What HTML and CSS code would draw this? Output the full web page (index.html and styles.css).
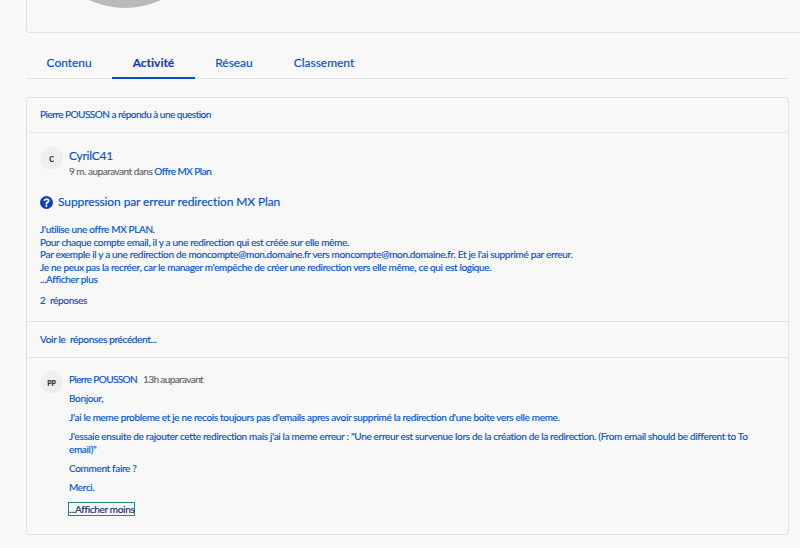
FILE: index.html
```html
<!DOCTYPE html>
<html lang="fr">
<head>
<meta charset="utf-8">
<title>Activité</title>
<link rel="stylesheet" href="styles.css">
</head>
<body>
<div class="profile"><div class="photo"></div></div>
<nav class="tabs">
  <a class="tab">Contenu</a>
  <a class="tab active">Activité</a>
  <a class="tab">Réseau</a>
  <a class="tab">Classement</a>
</nav>
<section class="card">
  <header class="head">Pierre POUSSON a répondu à une question</header>
  <div class="post">
    <div class="author">
      <span class="avatar">C</span>
      <div>
        <div class="name">CyrilC41</div>
        <div class="meta">9 m. auparavant dans <a>Offre MX Plan</a></div>
      </div>
    </div>
    <h2 class="title">
      <svg class="qicon" viewBox="0 0 24 24"><circle cx="12" cy="12" r="12" fill="#0b3fc4"/><path d="M6.6 9c.2-3 2.5-4.9 5.5-4.9 3.1 0 5.4 1.8 5.4 4.5 0 2-1.1 3.1-2.6 4.1-1.2.8-1.5 1.2-1.5 2.3v.5h-3.2v-.8c0-1.9.7-2.9 2.2-3.9 1.1-.8 1.7-1.3 1.7-2.1 0-1-.8-1.7-2-1.7-1.3 0-2.1.8-2.2 2z" fill="#fff"/><circle cx="11.9" cy="18.6" r="1.9" fill="#fff"/></svg>
      Suppression par erreur redirection MX Plan
    </h2>
    <div class="body">
      <div>J'utilise une offre MX PLAN.</div>
      <div>Pour chaque compte email, il y a une redirection qui est créée sur elle même.</div>
      <div>Par exemple il y a une redirection de moncompte@mon.domaine.fr vers moncompte@mon.domaine.fr. Et je l'ai supprimé par erreur.</div>
      <div>Je ne peux pas la recréer, car le manager m'empêche de créer une redirection vers elle même, ce qui est logique.</div>
      <div>...Afficher plus</div>
    </div>
    <div class="count">2&nbsp; réponses</div>
  </div>
  <div class="prev">Voir le&nbsp; réponses précédent...</div>
  <div class="reply">
    <span class="avatar">PP</span>
    <div class="rcontent">
      <div class="rhead"><a>Pierre POUSSON</a><span class="time">13h auparavant</span></div>
      <p>Bonjour,</p>
      <p>J'ai le meme probleme et je ne recois toujours pas d'emails apres avoir supprimé la redirection d'une boite vers elle meme.</p>
      <p>J'essaie ensuite de rajouter cette redirection mais j'ai la meme erreur : "Une erreur est survenue lors de la création de la redirection. (From email should be different to To email)"</p>
      <p>Comment faire ?</p>
      <p>Merci.</p>
      <a class="less">...Afficher moins</a>
    </div>
  </div>
</section>
</body>
</html>
```
FILE: styles.css
```css
* { box-sizing: border-box; }
html, body { margin: 0; height: 548px; overflow: hidden; }
body {
  background: #f8f8f8;
  font-family: "Lato", "Noto Sans", sans-serif;
  font-size: 10px;
  letter-spacing: -0.32px;
  color: #0050d7;
  -webkit-text-stroke: 0.15px currentColor;
}
.profile {
  height: 33px;
  margin-left: 26px;
  border: 1px solid #e3e3e3;
  border-width: 0 0 1px 1px;
  border-radius: 0 0 0 3px;
  overflow: hidden;
}
.photo {
  width: 170px; height: 170px;
  margin: -162px 0 0 13px;
  border-radius: 50%;
  background: #b9b9b9;
}
.tabs {
  display: flex;
  height: 33px;
  margin: 13px 11px 0 26px;
  border-bottom: 1px solid #e3e3e3;
  font-size: 12px;
  letter-spacing: -0.02px;
}
.tab { height: 33px; padding: 8.5px 20.5px 0; text-align: center; }
.active { font-weight: 700; color: #0a3fb8; border-bottom: 2px solid #0050d7; }
.card {
  margin: 18px 11px 0 26px;
  height: 438px;
  border: 1px solid #e3e3e3;
  border-radius: 3px;
}
.head {
  height: 35px;
  padding: 10px 13px 0;
  border-bottom: 1px solid #ececec;
  letter-spacing: -0.5px;
}
.post { height: 189px; padding: 14px 13px 0; border-bottom: 1px solid #e3e3e3; }
.author { display: flex; gap: 6px; }
.avatar {
  flex: none;
  width: 23px; height: 23px;
  border-radius: 50%;
  background: #efefef;
  color: #1c2433;
  font-size: 7px;
  letter-spacing: 0;
  font-weight: 700;
  display: flex; align-items: center; justify-content: center;
}
.name { font-size: 12px; line-height: 15px; margin-top: 1px; letter-spacing: -0.25px; }
.meta { color: #666; line-height: 14px; margin-top: 1px; letter-spacing: -0.5px; }
.meta a { color: #0050d7; }
.title {
  display: flex; align-items: center; gap: 5px;
  margin: 15px 0 0;
  font-size: 12px;
  font-weight: 400;
  line-height: 18px;
  letter-spacing: -0.1px;
}
.qicon { width: 13px; height: 13px; }
.body { margin-top: 12px; line-height: 12.6px; height: 63px; overflow: hidden; }
.count { margin-top: 8px; color: #0a46c8; }
.prev { height: 36px; padding: 10.5px 13px 0; border-bottom: 1px solid #e3e3e3; color: #0a46c8; }
.reply { display: flex; gap: 6px; padding: 13px 13px 0; }
.rcontent { flex: 1; }
.rhead { margin-top: 0.5px; line-height: 14px; letter-spacing: -0.6px; }
.time { color: #666; margin-left: 6px; }
.rcontent p { margin: 6px 0 0; line-height: 13px; }
.rcontent p + p { margin-top: 6px; }
.less {
  display: inline-block;
  margin: 8px 0 0 -1px;
  border: 1px solid #1f8a78;
  color: #122b66;
  line-height: 12px;
}
```
